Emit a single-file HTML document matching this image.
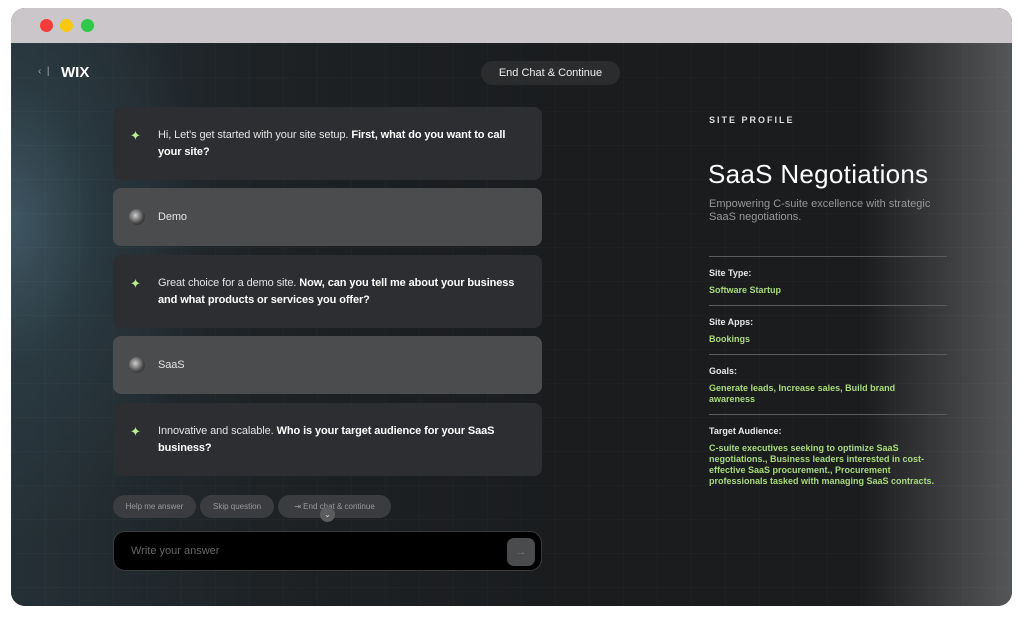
<!DOCTYPE html>
<html><head><style>
*{margin:0;padding:0;box-sizing:border-box}
body{width:1024px;height:621px;background:#fff;font-family:"Liberation Sans",sans-serif;position:relative;overflow:hidden}
.win{position:absolute;left:11px;top:8px;width:1001px;height:598px;border-radius:14px;overflow:hidden;background:#1b1d1f}
.bar{position:absolute;left:0;top:0;right:0;height:35px;background:#cbc6c9}
.dot{position:absolute;top:11px;width:13px;height:13px;border-radius:50%}
.main{position:absolute;left:0;top:35px;right:0;bottom:0;
background:radial-gradient(ellipse 200px 330px at 0px 180px,#3f5662 0%,rgba(44,60,68,.7) 45%,rgba(0,0,0,0) 100%),
linear-gradient(90deg,#253036 0%,#1e2225 25%,#1a1c1e 55%,#1b1c1e 85%,#555658 100%);}
.grid{position:absolute;inset:0;background-image:linear-gradient(90deg,rgba(255,255,255,.02) 1px,transparent 1px),linear-gradient(rgba(255,255,255,.02) 1px,transparent 1px);background-size:34px 34px}
.t{position:absolute;color:#e6e6e6}
.card{position:absolute;left:113px;width:429px;border-radius:8px;background:#2c2e31;color:#e4e4e4;font-size:11px;line-height:17px;padding:0 12px 0 45px;display:flex;align-items:center;letter-spacing:-0.1px}
.card.u{background:#4a4c4e}
.card b{color:#fff}
.ic{position:absolute;left:17px;color:#b8f08a;font-size:13px}
.av{position:absolute;left:16px;width:16px;height:16px;border-radius:50%;background:radial-gradient(circle at 40% 40%,#ccc,#444 60%,#222)}
.chip{position:absolute;top:495px;height:23px;border-radius:12px;background:#3a3c3f;color:#9a9a9a;font-size:8px;line-height:23px;text-align:center}
.lbl{font-size:9px;font-weight:bold;color:#e8e8e8;position:absolute;left:709px}
.val{font-size:9px;font-weight:bold;color:#a8dc7a;position:absolute;left:709px;line-height:11px;width:240px}
.hr{position:absolute;left:709px;width:238px;height:1px;background:#5a5c5e}
</style></head><body>
<div class="win">
<div class="bar"><div class="dot" style="left:29px;background:#f43c3a"></div><div class="dot" style="left:49px;background:#f9c80e"></div><div class="dot" style="left:70px;background:#2fc84a"></div></div>
<div class="main"><div class="grid"></div></div>
</div>
<div class="t" style="left:38px;top:66px;font-size:10px;color:#aaa">‹ &nbsp;|</div>
<div class="t" style="left:61px;top:64px;font-size:15px;font-weight:bold;color:#fff">WIX</div>
<div style="position:absolute;left:481px;top:61px;width:139px;height:24px;border-radius:12px;background:#2a2c2e;color:#eee;font-size:11px;line-height:24px;text-align:center">End Chat &amp; Continue</div>

<div class="card" style="top:107px;height:73px"><span class="ic" style="top:20px">✦</span><div>Hi, Let's get started with your site setup. <b>First, what do you want to call your site?</b></div></div>
<div class="card u" style="top:188px;height:58px"><span class="av" style="top:21px"></span>Demo</div>
<div class="card" style="top:255px;height:73px"><span class="ic" style="top:20px">✦</span><div>Great choice for a demo site. <b>Now, can you tell me about your business and what products or services you offer?</b></div></div>
<div class="card u" style="top:336px;height:58px"><span class="av" style="top:21px"></span>SaaS</div>
<div class="card" style="top:403px;height:73px"><span class="ic" style="top:20px">✦</span><div>Innovative and scalable. <b>Who is your target audience for your SaaS business?</b></div></div>

<div class="chip" style="left:113px;width:83px">Help me answer</div>
<div class="chip" style="left:200px;width:74px">Skip question</div>
<div class="chip" style="left:278px;width:113px">⇥ End chat &amp; continue</div>
<div style="position:absolute;left:320px;top:507px;width:15px;height:15px;border-radius:50%;background:#5a5c5e;color:#ddd;font-size:8px;line-height:15px;text-align:center">⌄</div>
<div style="position:absolute;left:113px;top:531px;width:429px;height:40px;border-radius:12px;background:#000;border:1px solid #3a3a3a"><span style="position:absolute;left:17px;top:13px;font-size:11px;color:#666">Write your answer</span><div style="position:absolute;right:6px;top:6px;width:28px;height:28px;border-radius:7px;background:#4a4b4d;color:#777;font-size:11px;line-height:28px;text-align:center">→</div></div>

<div class="t" style="left:709px;top:115px;font-size:9px;letter-spacing:2px;font-weight:bold;color:#ddd">SITE PROFILE</div>
<div class="t" style="left:708px;top:159px;font-size:26px;color:#fff;letter-spacing:0.3px">SaaS Negotiations</div>
<div class="t" style="left:709px;top:198px;font-size:11px;color:#999;width:240px;line-height:13px">Empowering C-suite excellence with strategic SaaS negotiations.</div>
<div class="hr" style="top:256px"></div>
<div class="lbl" style="top:268px">Site Type:</div><div class="val" style="top:285px">Software Startup</div>
<div class="hr" style="top:305px"></div>
<div class="lbl" style="top:317px">Site Apps:</div><div class="val" style="top:334px">Bookings</div>
<div class="hr" style="top:354px"></div>
<div class="lbl" style="top:366px">Goals:</div><div class="val" style="top:383px;width:210px">Generate leads, Increase sales, Build brand awareness</div>
<div class="hr" style="top:414px"></div>
<div class="lbl" style="top:426px">Target Audience:</div><div class="val" style="top:443px;width:238px">C-suite executives seeking to optimize SaaS negotiations., Business leaders interested in cost-effective SaaS procurement., Procurement professionals tasked with managing SaaS contracts.</div>
</body></html>
